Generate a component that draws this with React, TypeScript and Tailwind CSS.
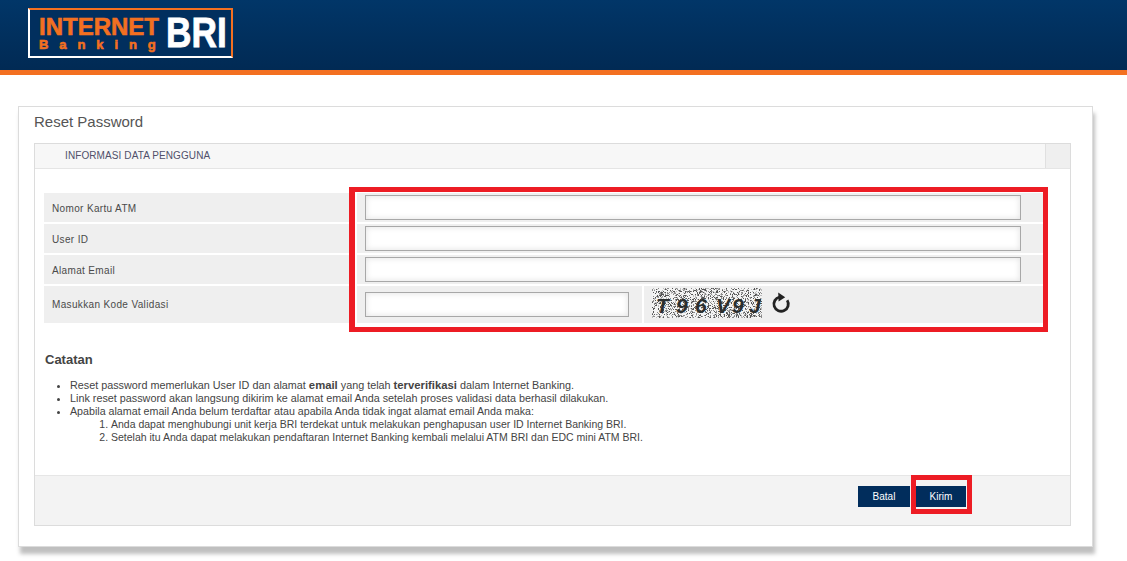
import React from "react";

function Noise() {
  const rects: React.ReactElement[] = [];
  let s = 12345;
  const rnd = () => {
    s = (s * 1103515245 + 12345) & 0x7fffffff;
    return (s >> 8) / 0x7fffff;
  };
  for (let y = 0; y < 30; y++) {
    for (let x = 0; x < 110; x++) {
      const r = rnd();
      if (r < 0.42) {
        rects.push(
          <rect key={x + "-" + y} x={x} y={y} width={1} height={1} fill={r < 0.16 ? "#555" : r < 0.3 ? "#8a8a8a" : "#bdbdbd"} />
        );
      }
    }
  }
  return <>{rects}</>;
}

function Captcha() {
  const letters: [string, number][] = [
    ["T", 4],
    ["9", 24],
    ["6", 43],
    ["V", 64],
    ["9", 80],
    ["J", 97],
  ];
  return (
    <svg width="110" height="30" viewBox="0 0 110 30" className="block shrink-0">
      <rect width="110" height="30" fill="#f4f4f4" />
      <Noise />
      {letters.map(([c, x], i) => (
        <text
          key={i}
          x={x}
          y={25}
          fontFamily="'Liberation Sans', sans-serif"
          fontWeight="bold"
          fontStyle="italic"
          fontSize="21"
          fill="#2b2f2f"
        >
          {c}
        </text>
      ))}
    </svg>
  );
}

function Refresh() {
  return (
    <svg width="20" height="22" viewBox="0 0 20 22" className="block shrink-0" fill="none">
      <path d="M16.2 8.2A7.2 7.2 0 1 1 8.6 5" stroke="#222" strokeWidth="2.8" strokeLinecap="butt" />
      <path d="M7.2 0.6L14.2 5.2L7.6 9.4Z" fill="#222" />
    </svg>
  );
}

const fieldClass =
  "block h-[25px] bg-white border border-[#a8a8a8] shadow-[inset_0_0_6px_rgba(0,0,0,0.12)] outline-none";

function Label({ children, nudge }: { children: React.ReactNode; nudge?: boolean }) {
  return (
    <div
      className={
        "bg-[#efefef] flex items-center pl-2 text-[10px] tracking-[0.35px] text-[#4a4a4a] " + (nudge ? "pt-[2px]" : "")
      }
    >
      {children}
    </div>
  );
}

function Field() {
  return (
    <div className="col-span-2 bg-[#efefef] flex items-center pl-2">
      <input className={fieldClass + " w-[656px]"} />
    </div>
  );
}

export default function App() {
  return (
    <div className="min-h-[561px] bg-white font-['Liberation_Sans',Arial,sans-serif] overflow-hidden">
      <header className="h-[75px] bg-gradient-to-b from-[#013668] to-[#012a54] border-b-[5px] border-[#f37021] pt-2 pl-[28px]">
        <div className="w-[205px] h-[50px] bg-[#012f5e] border-2 border-white border-t-[#f37021] border-r-[#f37021] flex relative">
          <div className="pl-[9px] pt-[6px] w-[136px] shrink-0">
            <div className="text-[24px] leading-[21px] font-bold text-[#f37021] [-webkit-text-stroke:0.6px_#f37021]">
              INTERNET
            </div>
            <div className="text-[13px] leading-[14px] mt-[1px] font-bold text-[#f37021] tracking-[10.9px] [-webkit-text-stroke:0.6px_#f37021] whitespace-nowrap">
              Banking
            </div>
          </div>
          <div className="text-[42px] leading-[46px] font-bold text-white origin-left scale-x-[0.84] [-webkit-text-stroke:0.8px_#ffffff]">
            BRI
          </div>
        </div>
      </header>

      <main className="ml-[18px] mt-[31px] w-[1075px] h-[441px] bg-white border border-[#dcdcdc] shadow-[2px_7px_4px_rgba(0,0,0,0.25)] pl-[15px] pr-[21px]">
        <h1 className="text-[15px] leading-[18px] mt-[6px] text-[#555]">Reset Password</h1>
        <section className="mt-[12px] w-[1037px] h-[383px] border border-[#dcdcdc] flex flex-col">
          <div className="h-[25px] shrink-0 bg-[#f7f7f7] border-b border-[#e5e5e5] flex">
            <div className="flex-1 pl-[30px] text-[10px] tracking-[0.1px] leading-[24px] text-[#50506a]">
              INFORMASI DATA PENGGUNA
            </div>
            <div className="w-[25px] bg-[#efefef] border-l border-[#e0e0e0]" />
          </div>

          <div className="relative mt-[24px] ml-[9px]">
            <div className="grid grid-cols-[311px_285px_401px] grid-rows-[29px_29px_29px_37px] gap-[2px]">
              <Label nudge>Nomor Kartu ATM</Label>
              <Field />
              <Label nudge>User ID</Label>
              <Field />
              <Label nudge>Alamat Email</Label>
              <Field />
              <Label>Masukkan Kode Validasi</Label>
              <div className="bg-[#efefef] flex items-center pl-2">
                <input className={fieldClass + " w-[264px]"} />
              </div>
              <div className="bg-[#efefef] flex items-start pl-2 pt-[2px] gap-[9px]">
                <Captcha />
                <div className="pt-[4px]">
                  <Refresh />
                </div>
              </div>
            </div>
            <div className="absolute left-[305px] top-[-6px] w-[699px] h-[145px] border-[5px] border-l-[6px] border-[#ed1c24] pointer-events-none" />
          </div>

          <div className="ml-[10px] mt-[29px] text-[#444]">
            <h2 className="text-[13px] leading-[16px] font-bold">Catatan</h2>
            <ul className="mt-[11px] text-[10.8px] leading-[13px] list-disc pl-[25px] text-[#444]">
              <li>
                Reset password memerlukan User ID dan alamat <b className="text-[11.3px]">email</b> yang telah{" "}
                <b className="text-[11.3px]">terverifikasi</b> dalam Internet Banking.
              </li>
              <li>Link reset password akan langsung dikirim ke alamat email Anda setelah proses validasi data berhasil dilakukan.</li>
              <li className="text-[10.68px]">
                Apabila alamat email Anda belum terdaftar atau apabila Anda tidak ingat alamat email Anda maka:
                <ol className="list-decimal pl-[41px] text-[10.5px]">
                  <li>Anda dapat menghubungi unit kerja BRI terdekat untuk melakukan penghapusan user ID Internet Banking BRI.</li>
                  <li>Setelah itu Anda dapat melakukan pendaftaran Internet Banking kembali melalui ATM BRI dan EDC mini ATM BRI.</li>
                </ol>
              </li>
            </ul>
          </div>

          <div className="mt-auto h-[50px] shrink-0 bg-[#f3f3f3] border-t border-[#e6e6e6] flex justify-end items-start pt-[10px] pr-[104px] gap-[6px] relative">
            <button className="w-[52px] h-[21px] bg-[#012d5c] text-white text-[10px]">Batal</button>
            <button className="w-[50px] h-[21px] bg-[#012d5c] text-white text-[10px]">Kirim</button>
            <div className="absolute right-[98px] top-[-1px] w-[61px] h-[39px] border-[5px] border-[#ed1c24] pointer-events-none" />
          </div>
        </section>
      </main>
    </div>
  );
}
